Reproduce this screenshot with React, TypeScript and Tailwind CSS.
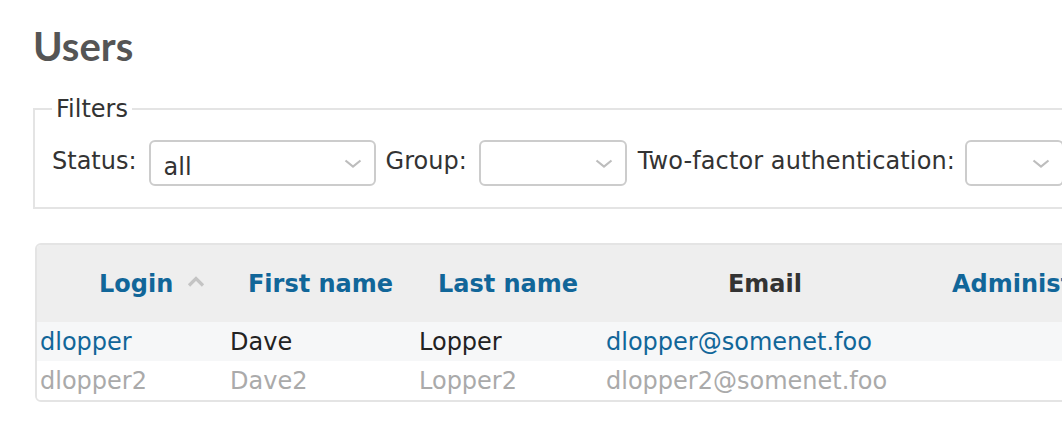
import React from 'react';

const Chevron = () => (
  <svg width="18" height="9" viewBox="0 0 18 9" className="shrink-0">
    <polyline points="1.5,1.5 9,7.5 16.5,1.5" fill="none" stroke="#bdbdbd" strokeWidth="2.2" />
  </svg>
);

const SortUp = () => (
  <svg width="18" height="11" viewBox="0 0 18 11" className="shrink-0">
    <polyline points="2,9.5 9,2.5 16,9.5" fill="none" stroke="#c4c4c4" strokeWidth="3.2" />
  </svg>
);

const Select = ({ value, width }: { value?: string; width: string }) => (
  <div
    className={`${width} h-[46px] shrink-0 flex items-center justify-between bg-white border-2 border-[#cccccc] rounded-[6px] pl-[13px] pr-[12px] text-[24px] text-[#333]`}
  >
    <span className="pt-[8px]">{value ?? ''}</span>
    <Chevron />
  </div>
);

interface User {
  login: string;
  first: string;
  last: string;
  email: string;
  locked: boolean;
}

const users: User[] = [
  { login: 'dlopper', first: 'Dave', last: 'Lopper', email: 'dlopper@somenet.foo', locked: false },
  { login: 'dlopper2', first: 'Dave2', last: 'Lopper2', email: 'dlopper2@somenet.foo', locked: true },
];

const App = () => {
  return (
    <div className="w-[1062px] h-[442px] overflow-hidden bg-white font-['DejaVu_Sans',sans-serif] text-[#333]">
      <div className="w-[1400px] pl-[33px]">
        <h2 className="mt-[22px] h-[48px] leading-[48px] text-[40px] font-bold text-[#555] font-['Lato',sans-serif]">
          Users
        </h2>

        <fieldset className="mt-[25px] w-[1300px] border-2 border-[#e4e4e4] px-[17px] pt-[17px] pb-[21px]">
          <legend className="px-[4px] text-[24px] leading-[28px] text-[#333]">Filters</legend>
          <div className="flex items-start text-[24px] leading-[28px]">
            <label className="mt-[7px] mr-[12px]">Status:</label>
            <Select value="all" width="w-[227px]" />
            <label className="mt-[7px] ml-[10px] mr-[12px]">Group:</label>
            <Select width="w-[148px]" />
            <label className="mt-[7px] ml-[11px] mr-[10px] tracking-[0.1px]">Two-factor authentication:</label>
            <Select width="w-[99px]" />
          </div>
        </fieldset>

        <div className="mt-[34px] ml-[2px] w-[1300px] border-2 border-[#e4e4e4] rounded-[6px] overflow-hidden text-[24px]">
          <div className="flex h-[77px] items-center bg-[#eeeeee] font-bold">
            <div className="w-[189px] flex items-center pl-[62px] text-[#116699]">
              <span>Login</span>
              <span className="ml-[14px] -mt-[4px]"><SortUp /></span>
            </div>
            <div className="w-[189px] text-center text-[#116699]">First name</div>
            <div className="w-[186px] text-center text-[#116699]">Last name</div>
            <div className="w-[328px] text-center text-[#333]">Email</div>
            <div className="w-[234px] text-center text-[#116699] whitespace-nowrap">Administrator</div>
          </div>
          {users.map((u, i) => (
            <div
              key={u.login}
              className={`flex h-[39px] items-center ${i % 2 === 0 ? 'bg-[#f6f7f8]' : 'bg-white'} ${u.locked ? 'text-[#aaaaaa]' : 'text-[#222]'}`}
            >
              <div className={`w-[189px] pl-[3px] ${u.locked ? '' : 'text-[#116699]'}`}>{u.login}</div>
              <div className="w-[189px] pl-[4px]">{u.first}</div>
              <div className="w-[186px] pl-[4px]">{u.last}</div>
              <div className={`w-[328px] pl-[5px] ${u.locked ? '' : 'text-[#116699]'}`}>{u.email}</div>
              <div className="w-[234px]"></div>
            </div>
          ))}
        </div>
      </div>
    </div>
  );
};

export default App;
